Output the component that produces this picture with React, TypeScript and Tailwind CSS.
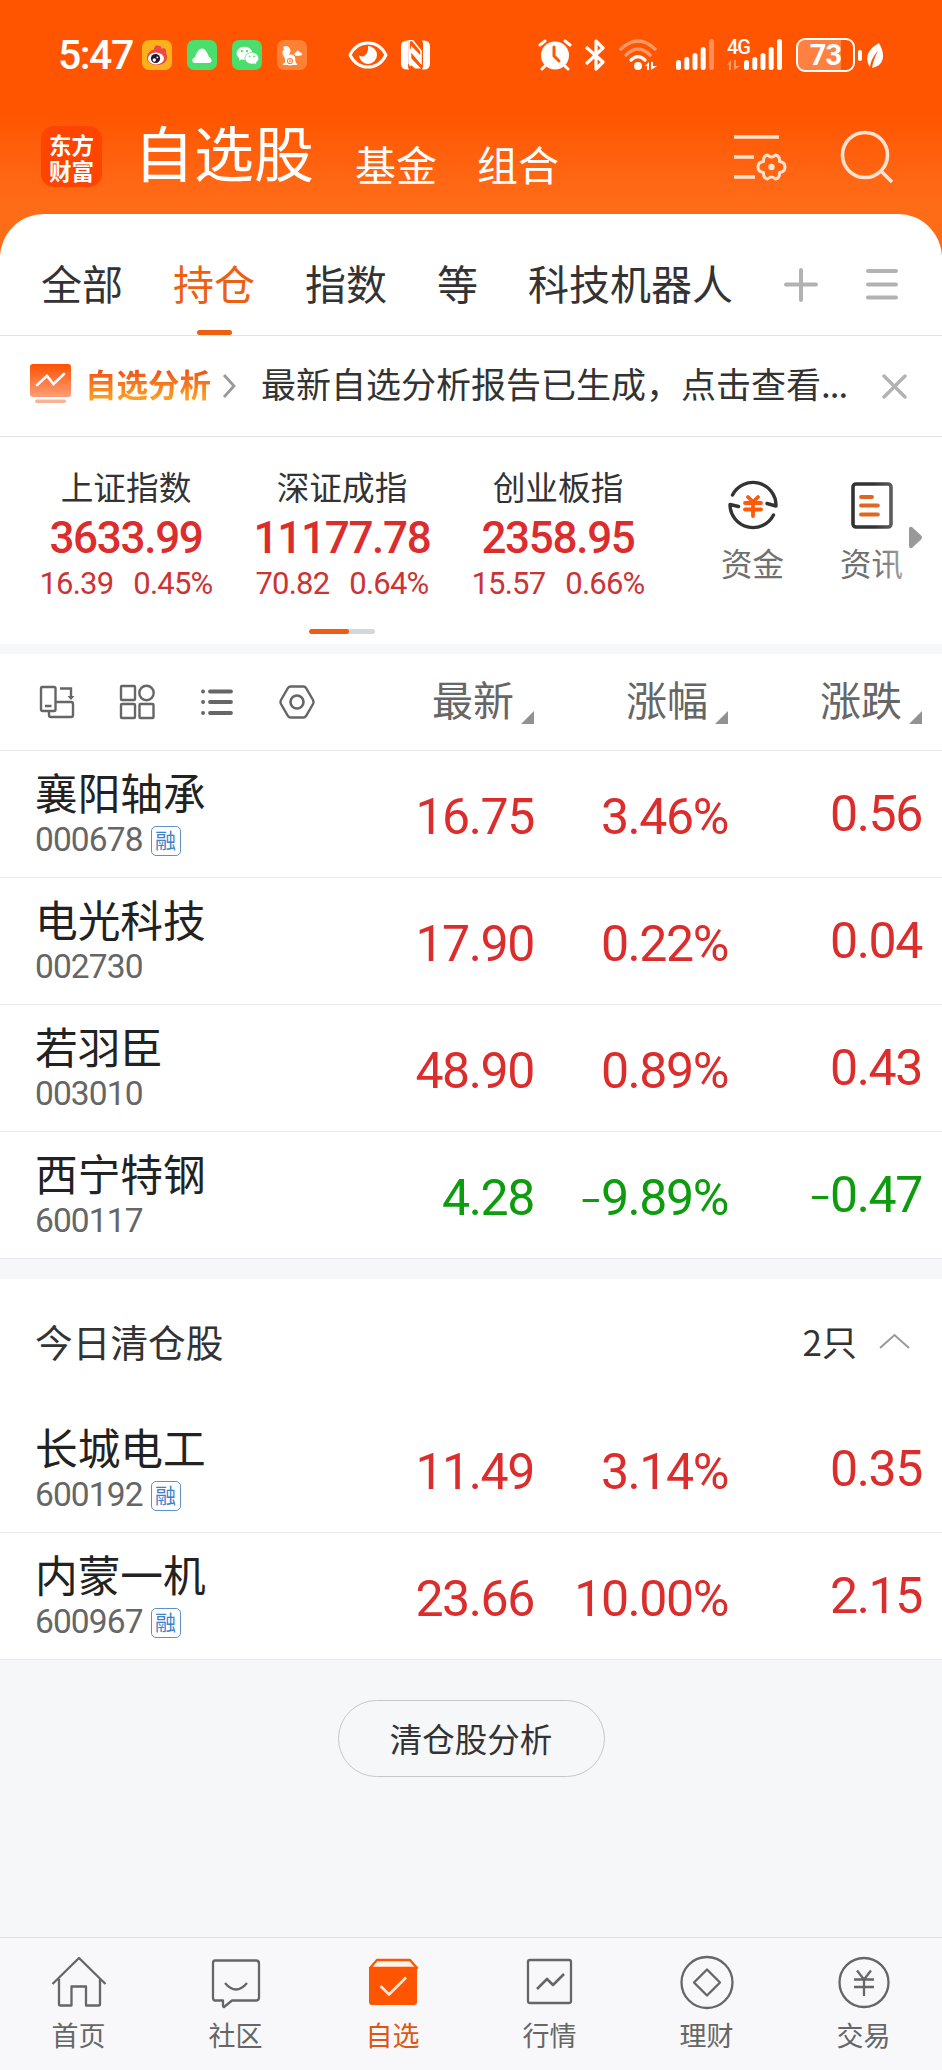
import { clsx } from "clsx"
import { AiFillWechat } from "react-icons/ai"

type Stock = {
  name: string
  code: string
  margin?: boolean
  price: string
  percent: string
  change: string
}

const tabs = ["全部", "持仓", "指数", "等", "科技机器人"]

const indexes = [
  { name: "上证指数", value: "3633.99", change: "16.39", percent: "0.45%" },
  { name: "深证成指", value: "11177.78", change: "70.82", percent: "0.64%" },
  { name: "创业板指", value: "2358.95", change: "15.57", percent: "0.66%" },
]

const holdings: Stock[] = [
  { name: "襄阳轴承", code: "000678", margin: true, price: "16.75", percent: "3.46%", change: "0.56" },
  { name: "电光科技", code: "002730", price: "17.90", percent: "0.22%", change: "0.04" },
  { name: "若羽臣", code: "003010", price: "48.90", percent: "0.89%", change: "0.43" },
  { name: "西宁特钢", code: "600117", price: "4.28", percent: "−9.89%", change: "−0.47" },
]

const cleared: Stock[] = [
  { name: "长城电工", code: "600192", margin: true, price: "11.49", percent: "3.14%", change: "0.35" },
  { name: "内蒙一机", code: "600967", margin: true, price: "23.66", percent: "10.00%", change: "2.15" },
]

function StatusBar() {
  return (
    <div className="flex h-[110px] items-center pl-[58px] text-white">
      <div className="w-[84px] font-[Roboto,sans-serif] text-[41px] leading-[50px] font-medium tracking-[-1.5px]">5:47</div>

      {/* Running apps */}
      <div className="flex gap-[15px]">
        <svg width="30" height="30" viewBox="0 0 30 30">
          <rect width="30" height="30" rx="7" fill="#fbb11c" />
          <path d="M5 18C5 13 10 9 12 10C12 6 15 4 16 6C18 5 20 7 19 9C22 7 25 9 24 13C27 18 24 25 15 25C9 25 5 22 5 18Z" fill="#ee4848" />
          <ellipse cx="14" cy="18.5" rx="8" ry="6" fill="#fff" />
          <circle cx="13.5" cy="18.5" r="4.6" fill="#23182a" />
          <circle cx="12.3" cy="20" r="1.7" fill="#fff" />
          <circle cx="15.3" cy="17.4" r="0.9" fill="#fff" />
        </svg>
        <svg width="30" height="30" viewBox="0 0 30 30">
          <rect width="30" height="30" rx="7" fill="#4ade6c" />
          <path d="M8 23C4.500 23 4.500 18.500 8 17C10 12 12 8.500 15 8.500C18 8.500 20 12 22 17C25.500 18.500 25.500 23 22 23Z" fill="#fff" />
        </svg>
        <div className="flex h-[30px] w-[30px] items-center justify-center rounded-[7px] bg-[#4ade6c]">
          <AiFillWechat size={25} />
        </div>
        <svg width="30" height="30" viewBox="0 0 30 30" fill="none">
          <rect width="30" height="30" rx="7" fill="#ff8136" />
          <path d="M9 25H6V23.500C9 23 9 20 7 17C4.500 13 5 10 8 9.500C5 8.500 6 5.500 10 6C14 8 14.500 12 11.500 15.500C14 13.500 17 14.500 18 17L18.500 22L20.500 25H15Z" fill="#fff" />
          <path d="M17 14L21 10L22 11.500L25.500 14L24 15.500L19 16Z" fill="#fff" />
          <circle cx="13" cy="21" r="3.800" fill="#ff8136" stroke="#fff" strokeWidth="1.4" />
          <circle cx="13" cy="21" r="1.500" stroke="#fff" strokeWidth="1.1" />
        </svg>
      </div>

      <svg className="ml-[41px]" width="40" height="28" viewBox="0 0 40 28" fill="none">
        <path d="M2 14C10 -2 30 -2 38 14C30 30 10 30 2 14Z" stroke="#fff" strokeWidth="3" strokeLinejoin="round" />
        <path d="M20 5A9 9 0 1 1 11 14C15 18 21 13 20 5Z" fill="#fff" />
      </svg>
      <svg className="ml-[13px]" width="29" height="30" viewBox="0 0 29 30" fill="#fff">
        <path d="M6 0.500H8L7 3V27L8 29.500H6Q0 29.500 0 23.500V6.500Q0 0.500 6 0.500Z" />
        <path d="M23 29.500H21L22 27V3L21 0.500H23Q29 0.500 29 6.500V23.500Q29 29.500 23 29.500Z" />
        <path d="M8.500 0.500H11.500L20 11V23L9.500 10V26L8 23V3Z" fill="none" stroke="#fff" strokeWidth="1.600" />
        <path d="M10 5.500L20 16V24L10 12.500ZM10 18L20 28.500H14L10 25Z" />
      </svg>

      <svg className="ml-[108px]" width="34" height="32" viewBox="0 0 34 32" fill="none" stroke="#fff">
        <circle cx="17" cy="16.5" r="14" fill="#fff" stroke="none" />
        <path d="M2 6L7 2M27 2L32 6M7 27L4 30M27 27L30 30" strokeWidth="3" strokeLinecap="round" />
        <path d="M16 8V17L21 22" stroke="#ff5800" strokeWidth="3" strokeLinecap="round" />
      </svg>
      <svg className="ml-[12px]" width="22" height="32" viewBox="0 0 22 32" fill="none" stroke="#fff" strokeWidth="3.200" strokeLinejoin="round">
        <path d="M2 8L19 23L12 30V2L19 9L2 25" />
      </svg>
      <svg className="ml-[12px]" width="40" height="32" viewBox="0 0 40 32" fill="none" stroke="#fff" strokeLinecap="round">
        <path d="M3 10Q20 -6 37 10M8 16Q20 4 32 16" strokeWidth="3.400" opacity="0.4" />
        <path d="M13 21Q20 14 27 21" strokeWidth="3.200" />
        <circle cx="20" cy="27" r="4" fill="#fff" stroke="none" />
        <path d="M27 27L31 23V31H29V27ZM33 23H35V27H39L33 31Z" fill="#fff" stroke="none" />
      </svg>
      <svg className="ml-[18px]" width="38" height="32" viewBox="0 0 38 32" fill="#fff">
        <rect x="0" y="21" width="5" height="10" rx="2.5" />
        <rect x="8.3" y="18" width="5" height="13" rx="2.5" />
        <rect x="16.5" y="14" width="5" height="17" rx="2.5" />
        <rect x="24.7" y="8" width="5" height="23" rx="2.5" />
        <rect x="33" y="0" width="5" height="31" rx="2.5" opacity="0.35" />
      </svg>
      <div className="ml-[13px] flex h-[32px] w-[56px]">
        <div className="w-[17px]">
          <div className="font-[Roboto,sans-serif] text-[20px] leading-[16px] font-medium tracking-[-1px]">4G</div>
          <svg className="mt-[5px]" width="14" height="11" viewBox="0 0 14 11" fill="#fff" opacity="0.4">
            <path d="M0 5L4 0V10H2V5ZM7 0H9V6H13L7 10Z" />
          </svg>
        </div>
        <svg width="39" height="32" viewBox="0 0 39 32" fill="#fff">
          <rect x="0" y="21" width="5" height="10" rx="2.5" />
          <rect x="8.3" y="18" width="5" height="13" rx="2.5" />
          <rect x="16.5" y="14" width="5" height="17" rx="2.5" />
          <rect x="24.7" y="8" width="5" height="23" rx="2.5" />
          <rect x="33" y="0" width="5" height="31" rx="2.5" />
        </svg>
      </div>

      {/* Battery */}
      <div className="ml-[13px] flex h-[34px] w-[59px] items-center justify-center rounded-[9px] border-[2.5px] border-white bg-linear-to-r from-[#ff8040] from-[78%] to-transparent to-[78%] font-[Roboto,sans-serif] text-[29px] leading-[34px] font-bold tracking-[-1px]">
        73
      </div>
      <svg className="ml-[3px]" width="4" height="11" viewBox="0 0 4 11">
        <rect width="4" height="11" rx="2" fill="#fff" />
      </svg>
      <svg className="ml-[5px]" width="17" height="27" viewBox="0 0 17 27" fill="#fff">
        <path d="M12 1C-1 8 -2 18 3 25C4 18 7 13 11 9C8 14 6 20 5 26C17 24 19 13 12 1Z" />
      </svg>
    </div>
  )
}

function Header() {
  return (
    <div className="flex h-[104px] pl-[41px] text-white">
      <div className="mt-4 flex h-[61px] w-[61px] flex-col items-center justify-center rounded-[13px] bg-[#ff4400] text-[22.500px] leading-[26px] font-bold">
        <div>东方</div>
        <div>财富</div>
      </div>
      <div className="-mt-[2px] ml-[32px] text-[60px] leading-[86px]">自选股</div>
      <div className="ml-[41px] mt-[23px] text-[41px] leading-[60px]">基金</div>
      <div className="ml-[40px] mt-[23px] text-[41px] leading-[60px]">组合</div>
      <svg className="ml-[174px] mt-[22px]" width="54" height="52" viewBox="0 0 54 52" fill="none" stroke="#ffe3d0" strokeWidth="3.6">
        <path d="M1 5H46M1 25H21M1 45H22" />
        <path
          d="M34.500 23Q38.500 27 42.500 23Q47 24 46.500 29.500Q52 30 52 35Q52 40 46.500 40.500Q47 46 42.500 47Q38.500 43 34.500 47Q30 46 30.500 40.500Q25 40 25 35Q25 30 30.500 29.500Q30 24 34.500 23Z"
          strokeWidth="3"
          strokeLinejoin="round"
        />
        <circle cx="38.5" cy="35" r="3.2" fill="#ffe3d0" stroke="none" />
      </svg>
      <svg className="ml-[53px] mt-[20px]" width="54" height="54" viewBox="0 0 54 54" fill="none" stroke="#ffe3d0" strokeWidth="3.6">
        <circle cx="25" cy="25" r="22.5" />
        <path d="M40 40L52 52" />
      </svg>
    </div>
  )
}

function FundIcon() {
  return (
    <svg width="50" height="50" viewBox="0 0 50 50" fill="none" stroke="#333" strokeWidth="3.4" strokeLinecap="round" strokeLinejoin="round">
      <path d="M4.500 15A23 23 0 0 1 48 26L39 23.500" />
      <path d="M45.500 35A23 23 0 0 1 2 24.500L10.500 26.500" />
      <path d="M20 17L25 22L30 17M17 23H33M17 29.500H33M25 22V36" stroke="#ff5a0a" strokeWidth="3.8" />
    </svg>
  )
}

function NewsIcon() {
  return (
    <svg width="42" height="50" viewBox="0 0 42 50" fill="none" stroke="#333" strokeWidth="3.6" strokeLinecap="round">
      <rect x="2" y="4" width="38" height="43" rx="3" />
      <path d="M10 17H21M10 25.500H27M10 34.500H27" stroke="#e0651f" strokeWidth="3.8" />
    </svg>
  )
}

function Quote({ value }: { value: string }) {
  if (!value.startsWith("−")) return <>{value}</>
  return (
    <>
      <span className="text-[40px]">−</span>
      {value.slice(1)}
    </>
  )
}

function StockRow({ stock }: { stock: Stock }) {
  const down = stock.change.startsWith("−")
  return (
    <div className="flex h-[127px] border-b border-[#e9e9eb] bg-white pl-[35px] pr-[20px]">
      <div className="flex-1 pt-[15px]">
        <div className="text-[42.7px] leading-[50px] text-[#222]">{stock.name}</div>
        <div className="flex items-center text-[#666]">
          <span className="mt-[3px] font-[Roboto,sans-serif] text-[33.500px] leading-[42px] tracking-[-0.9px]">{stock.code}</span>
          {stock.margin && (
            <span className="ml-[8px] mt-[4px] h-[30px] w-[30px] rounded-[5px] border border-[#5b93c7] text-center text-[21px] leading-[25px] text-[#3c82c8]">
              融
            </span>
          )}
        </div>
      </div>
      <div
        className={clsx(
          "flex text-right font-[Roboto,sans-serif] text-[50px] leading-[60px] tracking-[-1.4px]",
          down ? "text-[#0d9c0d]" : "text-[#dc2d2d]",
        )}
      >
        <div className="w-[194px] pt-[36px]">
          <Quote value={stock.price} />
        </div>
        <div className="w-[194px] pt-[36px]">
          <Quote value={stock.percent} />
        </div>
        <div className="w-[194px] pt-[33px]">
          <Quote value={stock.change} />
        </div>
      </div>
    </div>
  )
}

const navItems = [
  {
    label: "首页",
    icon: (
      <>
        <path d="M1.500 29L28 3L54.500 29" />
        <path d="M8 24V49Q8 50.500 9.500 50.500H20.500V31.500H35V50.500H47.500Q49 50.500 49 49V24" />
      </>
    ),
  },
  {
    label: "社区",
    icon: (
      <>
        <path d="M7 5.500H48Q51 5.500 51 8.500V42.500Q51 45.500 48 45.500H24L16 52Q15 52 15 50V45.500H7Q5 45.500 5 42.500V8.500Q5 5.500 7 5.500Z" />
        <path d="M17 28Q28 41 39 28" />
      </>
    ),
  },
  {
    label: "自选",
    icon: (
      <>
        <path d="M5 13L12 5H45L52 13Z" fill="#fff3ea" stroke="#ff5500" />
        <path d="M4 12H52V47Q52 50 49 50H7Q4 50 4 47Z" fill="#ff5500" stroke="none" />
        <path d="M15.500 31L24 39.500L41 22.500" stroke="#ffe9dc" strokeWidth="2.6" />
      </>
    ),
  },
  {
    label: "行情",
    icon: (
      <>
        <rect x="6" y="5" width="43" height="43" rx="2" />
        <path d="M15 34L25 24L31 30L42 19" strokeWidth="2.600" />
      </>
    ),
  },
  {
    label: "理财",
    icon: (
      <>
        <circle cx="28" cy="27.500" r="25.500" />
        <path d="M28 14.500L41 27.500L28 40.500L15 27.500Z" />
      </>
    ),
  },
  {
    label: "交易",
    icon: (
      <>
        <circle cx="28" cy="27.500" r="24.500" />
        <path d="M21 15.500L28 24.500L35 15.500M18 24.500H38M18 32H38M28 24.500V41" />
      </>
    ),
  },
]

export default function App() {
  return (
    <div className="flex h-[2070px] w-[942px] flex-col overflow-hidden bg-[#f6f7f9] font-['Noto_Sans_CJK_SC',sans-serif] whitespace-nowrap">
      <div className="bg-linear-to-b from-[#ff5500] from-[34%] to-[#ff6c18] to-[60%]">
        <StatusBar />
        <Header />

        {/* Group tabs */}
        <div className="flex h-[122px] rounded-t-[44px] border-b border-[#e2e2e4] bg-white pl-[41px] text-[41px] leading-[60px] text-[#333]">
          <div className="flex gap-[50px] pt-[38px]">
            {tabs.map((tab) => (
              <div key={tab} className={clsx("flex flex-col items-center", tab === "持仓" && "text-[#ec6012]")}>
                {tab}
                {tab === "持仓" && <div className="mt-[18px] h-[5px] w-[35px] rounded-full bg-[#ec6012]" />}
              </div>
            ))}
          </div>
          <svg className="ml-[51px] mt-[53px]" width="34" height="36" viewBox="0 0 34 36" stroke="#b2b2b2" strokeWidth="4" strokeLinecap="round">
            <path d="M2 17.500H32M17 3V33" />
          </svg>
          <svg className="ml-[47px] mt-[53px]" width="34" height="36" viewBox="0 0 34 36" stroke="#b2b2b2" strokeWidth="4" strokeLinecap="round">
            <path d="M3 4H31M3 17.500H31M3 30.500H31" />
          </svg>
        </div>
      </div>

      {/* Analysis notice */}
      <div className="flex h-[101px] items-center border-b border-[#e2e2e4] bg-white pl-[30px]">
        <svg width="41" height="40" viewBox="0 0 41 40" fill="none" className="-mt-[4px]">
          <defs>
            <linearGradient id="report" x1="0" y1="0" x2="0" y2="1">
              <stop stopColor="#ff5200" />
              <stop offset="1" stopColor="#ff9d78" />
            </linearGradient>
          </defs>
          <rect width="41" height="33" rx="3" fill="url(#report)" />
          <path d="M7 21L17 12L23.500 20L34 10" stroke="#fff" strokeWidth="2.600" strokeLinecap="round" />
          <rect x="5" y="35.500" width="31" height="3.500" rx="1.700" fill="#f9b496" />
        </svg>
        <div className="ml-[14px] -mt-[7px] bg-linear-to-b from-[#f0541a] from-[25%] to-[#fb9f22] to-[85%] bg-clip-text text-[31.500px] leading-[46px] font-bold text-transparent">
          自选分析
        </div>
        <svg className="ml-[11px]" width="14" height="24" viewBox="0 0 14 24" fill="none" stroke="#999" strokeWidth="2.800">
          <path d="M2 1L12 12L2 23" />
        </svg>
        <div className="ml-[25px] -mt-[6px] text-[35px] leading-[50px] text-[#333]">
          最新自选分析报告已生成，点击查看<span className="tracking-[-1px]">...</span>
        </div>
        <svg className="ml-auto mr-[35px]" width="25" height="25" viewBox="0 0 25 25" stroke="#b2b2b2" strokeWidth="3.400" strokeLinecap="round">
          <path d="M2 2L23 23M23 2L2 23" />
        </svg>
      </div>

      {/* Market indexes */}
      <div className="relative bg-white pb-[10px] pl-[18px]">
        <div className="flex h-[192px] pt-[28px]">
          {indexes.map((item) => (
            <div key={item.name} className="flex w-[216px] flex-col items-center">
              <div className="text-[32.7px] leading-[42px] text-[#333]">{item.name}</div>
              <div className="mt-[6px] font-[Roboto,sans-serif] text-[44px] leading-[50px] font-medium tracking-[-1.3px] text-[#dc2d2d]">
                {item.value}
              </div>
              <div className="mt-[1px] flex gap-[20px] font-[Roboto,sans-serif] text-[31px] leading-[40px] tracking-[-0.8px] text-[#cc3434]">
                <span>{item.change}</span>
                <span>{item.percent}</span>
              </div>
            </div>
          ))}
          <div className="ml-[27px] flex pt-[15px] text-[31.5px] leading-[44px] text-[#707070]">
            <div className="flex w-[119px] flex-col items-center gap-[10px]">
              <FundIcon />
              资金
            </div>
            <div className="flex w-[119px] flex-col items-center gap-[10px]">
              <NewsIcon />
              资讯
            </div>
          </div>
        </div>
        <div className="ml-[291px] h-[5px] w-[66px] overflow-hidden rounded-full bg-[#d5d8db]">
          <div className="h-full w-[40px] rounded-full bg-[#f05c12]" />
        </div>
        {/* Fade and arrow over the scrolling shortcuts */}
        <div className="absolute top-0 right-0 h-[180px] w-[68px] bg-linear-to-r from-white/0 to-white/80" />
        <svg className="absolute top-[89px] right-[20px]" width="13" height="23" viewBox="0 0 13 23" fill="#999">
          <path d="M0 3Q0 0 3 1L12 9.500Q14 11.500 12 13.500L3 22Q0 23 0 20Z" />
        </svg>
      </div>

      {/* Table header */}
      <div className="mt-[10px] flex h-[97px] items-center border-b border-[#e9e9eb] bg-white pl-[39px] pr-[20px]">
        <div className="flex flex-1 gap-[44px]">
          <svg width="36" height="36" viewBox="0 0 36 36" fill="none" stroke="#666" strokeWidth="2.400">
            <rect x="2" y="3" width="14.500" height="24" rx="1.500" />
            <path d="M6 22H12.500M21 4.500H32V14M10 27V31Q10 33 12 33H32Q34 33 34 31V20Q34 18 32 18H17" />
            <path d="M28.500 12H35.500L32 16Z" fill="#666" stroke="none" />
          </svg>
          <svg width="36" height="36" viewBox="0 0 36 36" fill="none" stroke="#666" strokeWidth="2.400">
            <rect x="2" y="2" width="14" height="14" rx="1" />
            <circle cx="27.500" cy="9" r="7.200" />
            <rect x="2" y="20" width="14" height="14" rx="1" />
            <rect x="20.500" y="20" width="14" height="14" rx="1" />
          </svg>
          <svg width="36" height="36" viewBox="0 0 36 36" fill="none" stroke="#666" strokeWidth="3.800" strokeLinecap="round">
            <path d="M4 7.500H4.100M11 7.500H32M4 18H4.100M11 18H32M4 29H4.100M11 29H32" />
          </svg>
          <svg width="36" height="36" viewBox="0 0 36 36" fill="none" stroke="#666" strokeWidth="2.400">
            <path d="M11.500 2.500H24.500Q26 2.500 27 4L34 16Q35 18 34 20L27 32Q26 33.500 24.500 33.500H11.500Q10 33.500 9 32L2 20Q1 18 2 16L9 4Q10 2.500 11.500 2.500Z" />
            <circle cx="18" cy="18" r="6.500" strokeWidth="2.600" />
          </svg>
        </div>
        {["最新", "涨幅", "涨跌"].map((label) => (
          <div key={label} className="flex w-[194px] items-end justify-end text-[41px] leading-[60px] text-[#666]">
            <span className="-mt-[5px] mb-[4px]">{label}</span>
            <svg className="mb-[8px] ml-[7px]" width="13" height="13" viewBox="0 0 13 13" fill="#919197">
              <path d="M13 0V13H0Z" />
            </svg>
          </div>
        ))}
      </div>

      {holdings.map((stock) => (
        <StockRow key={stock.code} stock={stock} />
      ))}

      {/* Positions closed today */}
      <div className="mt-[20px] flex h-[127px] items-center justify-between bg-white pb-[3px] pl-[35px] pr-[32px] text-[#333]">
        <div className="text-[37.700px] leading-[60px]">今日清仓股</div>
        <div className="flex items-center text-[35px] leading-[60px]">
          2只
          <svg className="ml-[22px]" width="31" height="16" viewBox="0 0 31 16" fill="none" stroke="#999" strokeWidth="2">
            <path d="M1 15L15.500 2L30 15" />
          </svg>
        </div>
      </div>
      {cleared.map((stock) => (
        <StockRow key={stock.code} stock={stock} />
      ))}

      <button className="mx-auto mt-[40px] h-[77px] w-[267px] rounded-full border border-[#c8c8ca] pb-[1px] text-[32.500px] text-[#333]">
        清仓股分析
      </button>

      {/* Bottom navigation */}
      <div className="mt-auto flex h-[133px] border-t border-[#dfdfe2] bg-[#f8f8fa]">
        {navItems.map((item) => (
          <div
            key={item.label}
            className={clsx("flex flex-1 flex-col items-center pt-[17px] text-[27px] leading-[36px]", item.label === "自选" ? "text-[#dd5714]" : "text-[#666]")}
          >
            <svg width="56" height="56" viewBox="0 0 56 56" fill="none" stroke="currentColor" strokeWidth="2.300" strokeLinejoin="round">
              {item.icon}
            </svg>
            <div className="mt-[6px]">{item.label}</div>
          </div>
        ))}
      </div>
    </div>
  )
}
